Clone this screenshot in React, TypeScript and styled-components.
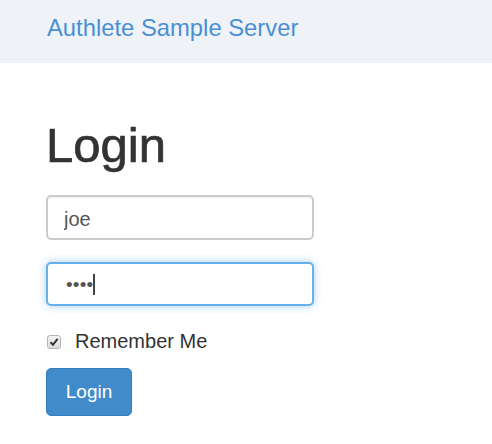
import React from "react";
import styled, { createGlobalStyle } from "styled-components";

const GlobalStyle = createGlobalStyle`
  html, body {
    margin: 0;
    padding: 0;
    background: #ffffff;
    font-family: "Liberation Sans", Arial, Helvetica, sans-serif;
    color: #333333;
  }
`;

const Navbar = styled.nav`
  height: 63px;
  background: #eff3f7;
  display: flex;
  align-items: center;
  padding: 0 47px;
`;

const Brand = styled.a`
  color: #4a8fd4;
  font-size: 23.8px;
  text-decoration: none;
  margin-top: -8px;
`;

const Container = styled.main`
  padding: 0 46px;
`;

const Title = styled.h1`
  margin: 56px 0 0;
  font-size: 49px;
  font-weight: 500;
  line-height: 1.1;
  color: #333333;
  -webkit-text-stroke: 0.7px #333333;
`;

const Form = styled.form`
  display: flex;
  flex-direction: column;
  gap: 22px;
  margin-top: 22px;
  width: 268px;
`;

const Field = styled.input`
  box-sizing: border-box;
  width: 268px;
  height: 45px;
  padding: 4px 16px 0;
  font-family: inherit;
  font-size: 20px;
  color: #555555;
  background: #ffffff;
  border: 2px solid #cccccc;
  border-radius: 5px;
  box-shadow: inset 0 1px 1px rgba(0, 0, 0, 0.075);
  outline: none;
`;

const FakeField = styled.div`
  box-sizing: border-box;
  width: 268px;
  height: 44px;
  padding: 2px 18px 0;
  display: flex;
  align-items: center;
  font-size: 20px;
  color: #555555;
  background: #ffffff;
  border: 2px solid #66afe9;
  border-radius: 5px;
  box-shadow: 0 0 8px rgba(102, 175, 233, 0.6);
`;

const Dots = styled.span`
  letter-spacing: 0.2px;
  font-size: 19px;
`;

const Caret = styled.span`
  display: inline-block;
  width: 2px;
  height: 21px;
  background: #444;
  margin-left: 0;
`;

const CheckRow = styled.label`
  display: flex;
  align-items: center;
  gap: 14px;
  font-size: 20px;
  color: #333;
  margin-top: 2px;
  height: 24px;
`;

const CheckBox = styled.span`
  box-sizing: border-box;
  width: 14px;
  height: 14px;
  border: 1px solid #b4b4b4;
  border-radius: 3px;
  background: linear-gradient(#f4f4f4, #dcdcdc);
  display: flex;
  align-items: center;
  justify-content: center;
  margin-left: 1px;
`;

const Button = styled.button`
  align-self: flex-start;
  box-sizing: border-box;
  width: 86px;
  height: 48px;
  margin-top: -8px;
  font-family: inherit;
  font-size: 19px;
  color: #ffffff;
  background: #428bca;
  border: 1px solid #357ebd;
  border-radius: 5px;
`;

const App: React.FC = () => {
  return (
    <>
      <GlobalStyle />
      <Navbar>
        <Brand href="#">Authlete Sample Server</Brand>
      </Navbar>
      <Container>
        <Title>Login</Title>
        <Form onSubmit={(e) => e.preventDefault()}>
          <Field type="text" defaultValue="joe" />
          <FakeField>
            <Dots>••••</Dots>
            <Caret />
          </FakeField>
          <CheckRow>
            <CheckBox>
              <svg width="10" height="10" viewBox="0 0 10 10">
                <path d="M1.5 5.2 L4 7.8 L8.6 1.8" fill="none" stroke="#333" strokeWidth="2" />
              </svg>
            </CheckBox>
            Remember Me
          </CheckRow>
          <Button type="submit">Login</Button>
        </Form>
      </Container>
    </>
  );
};

export default App;
